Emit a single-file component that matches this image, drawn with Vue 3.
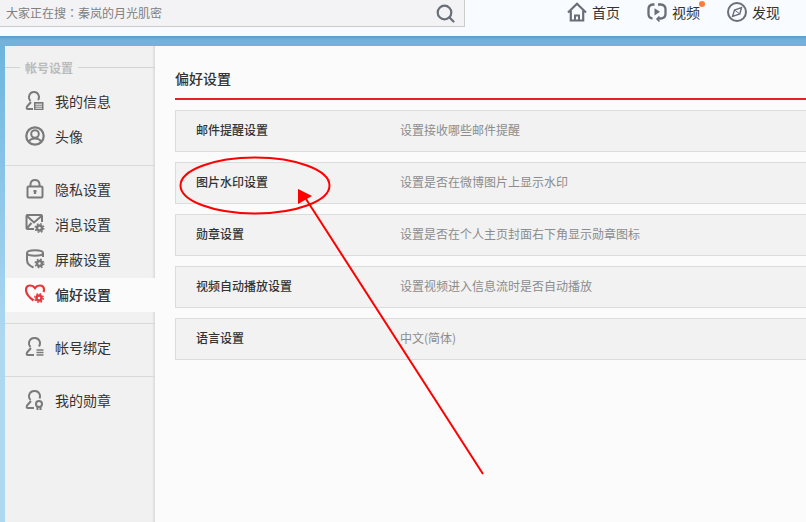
<script setup>
const groups = [
  [
    { name: '我的信息', icon: 'info' },
    { name: '头像', icon: 'avatar' },
  ],
  [
    { name: '隐私设置', icon: 'lock' },
    { name: '消息设置', icon: 'mail' },
    { name: '屏蔽设置', icon: 'shield' },
    { name: '偏好设置', icon: 'heart', active: true },
  ],
  [{ name: '帐号绑定', icon: 'bind' }],
  [{ name: '我的勋章', icon: 'medal' }],
]

const rows = [
  { title: '邮件提醒设置', desc: '设置接收哪些邮件提醒' },
  { title: '图片水印设置', desc: '设置是否在微博图片上显示水印' },
  { title: '勋章设置', desc: '设置是否在个人主页封面右下角显示勋章图标' },
  { title: '视频自动播放设置', desc: '设置视频进入信息流时是否自动播放' },
  { title: '语言设置', desc: '中文(简体)' },
]
</script>

<template>
  <div class="page">
    <header class="topbar">
      <div class="search">
        <span class="search-text">大家正在搜<span class="colon">：</span>秦岚的月光肌密</span>
        <svg class="search-icon" width="20" height="20" viewBox="0 0 20 20" fill="none" stroke="#696e78" stroke-width="2.200">
          <circle cx="9.500" cy="9.500" r="6.800" />
          <path d="M14.500 14.500l4 4" stroke-linecap="round" />
        </svg>
      </div>
      <nav class="nav">
        <a class="nav-item">
          <svg width="20" height="20" viewBox="0 0 20 20" fill="none" stroke="#696e78" stroke-width="2.200">
            <path d="M1 10.500L10 1.800l9 8.700" />
            <path d="M3.800 8.500v10h12.400v-10" />
            <path d="M8 18.500v-5h4v5" stroke-width="2" />
          </svg>
          首页
        </a>
        <a class="nav-item">
          <svg width="20" height="20" viewBox="0 0 20 20" fill="none" stroke="#696e78" stroke-width="2.300">
            <path d="M7.500 2.500H6Q1.500 3 1.500 7v5q0 4 4 4.500" />
            <path d="M11 2.500h2.500q5 .5 5 4.500v5q0 4-4.500 4.500h-3" />
            <path d="M12.500 14.500l-2.500 2.500 2.500 2.500" stroke-width="1.600" />
            <path d="M7.500 6.200l5.500 3.600-5.500 3.600z" fill="#696e78" stroke="none" />
          </svg>
          <span class="video">视频<i class="dot"></i></span>
        </a>
        <a class="nav-item">
          <svg width="20" height="20" viewBox="0 0 20 20" fill="none" stroke="#696e78" stroke-width="2">
            <circle cx="10" cy="10" r="9" />
            <path d="M14.500 5.500L12.800 12 5.500 14.500 7.500 8z" stroke-width="1.400" />
            <path d="M7.500 8l5.300 4" stroke-width="1" />
          </svg>
          发现
        </a>
      </nav>
    </header>

    <div class="band"></div>

    <div class="frame">
      <aside class="side">
        <div class="side-title"><span>帐号设置</span></div>
        <div v-for="(group, g) in groups" :key="g" class="side-group">
          <a v-for="item in group" :key="item.name" class="side-item" :class="{ active: item.active }">
            <svg class="side-icon" width="20" height="20" viewBox="0 0 20 20" fill="none" :stroke="item.active ? '#e4393c' : '#7a7a7a'" stroke-width="2">
              <template v-if="item.icon === 'info'">
                <path d="M5.500 10Q3.500 8 4 5.500 5 1 9 1t5 4.500q.2 2-1 3.500" />
                <path d="M6 11l-4 4.500Q1 18 3 18h5" />
                <path d="M9 11h9.500v8H9z" fill="#7a7a7a" stroke="none" />
                <path d="M10.500 13.200h6.500M10.500 15.200h6.500M10.500 17.200h6.500" stroke="#f1f1f1" stroke-width="1" />
              </template>
              <template v-else-if="item.icon === 'avatar'">
                <circle cx="10" cy="10" r="8.700" stroke-width="2.200" />
                <circle cx="10" cy="8" r="3.800" />
                <path d="M4 15.500q1.500-3 6-3t6 3" />
              </template>
              <template v-else-if="item.icon === 'lock'">
                <path d="M2.500 8.500q0-1 1-1h13q1 0 1 1v9q0 1-1 1h-13q-1 0-1-1z" />
                <path d="M5.500 7V5q.5-4 4.500-4t4.500 4v2" />
                <path d="M10 11.500v3.500M8.500 12.200h3" stroke-width="2.200" />
              </template>
              <template v-else-if="item.icon === 'mail'">
                <path d="M9 15H2.500q-1 0-1-1V2q0-1 1-1h13.500q1 0 1 1v6" />
                <path d="M2 2l7 6.500L16.500 2M2 14l4.500-5" />
                <circle cx="14.500" cy="14" r="2.500" stroke-width="2.500" />
                <circle cx="14.500" cy="14" r="4.300" stroke-width="1.400" stroke-dasharray="1.700 1.700" />
              </template>
              <template v-else-if="item.icon === 'shield'">
                <path d="M2 4v7q0 5 6.500 7.500M18 4v4" />
                <path d="M2 4q0-2.700 8-2.700t8 2.700q0 2.700-8 2.700T2 4z" />
                <circle cx="14.500" cy="14.500" r="2.500" stroke-width="2.500" />
                <circle cx="14.500" cy="14.500" r="4.300" stroke-width="1.400" stroke-dasharray="1.700 1.700" />
              </template>
              <template v-else-if="item.icon === 'heart'">
                <path d="M8.500 16.500Q1 11 1 6q0-4.500 4.200-4.500 3 0 4.800 2.500 1.800-2.500 4.800-2.500Q19 1.500 19 6q0 1-.4 2" stroke-width="2.200" />
                <circle cx="14" cy="14" r="2.500" stroke-width="2.500" />
                <circle cx="14" cy="14" r="4.300" stroke-width="1.400" stroke-dasharray="1.700 1.700" />
              </template>
              <template v-else-if="item.icon === 'bind'">
                <path d="M5.500 10Q3.500 8 4 5.500 5 1 9.500 1T15 5.500q.2 2-1 4" />
                <path d="M6 11l-4 4.500Q1 18 3 18h6" />
                <path d="M11.500 13h7M11.500 15.500h7M11.500 18h7" stroke-width="1.400" />
              </template>
              <template v-else>
                <path d="M5.500 10Q3.500 8 4 5.500 5 1 9.500 1T15 5.500q.2 1.500-.5 3" />
                <path d="M6 11l-4 4.500Q1 18 3 18h6" />
                <circle cx="14" cy="14" r="3" />
                <path d="M12.500 17v3M15.500 17v3" />
              </template>
            </svg>
            <span>{{ item.name }}</span>
          </a>
        </div>
      </aside>

      <main class="main">
        <h2 class="main-title">偏好设置</h2>
        <div v-for="row in rows" :key="row.title" class="row">
          <span class="row-title">{{ row.title }}</span>
          <span class="row-desc">{{ row.desc }}</span>
        </div>
      </main>
    </div>

    <svg class="mark" width="806" height="522" viewBox="0 0 806 522" fill="none" stroke="#f00" stroke-width="2">
      <ellipse cx="255" cy="185.500" rx="74.500" ry="28" />
      <path d="M483 474L306 199" />
      <path d="M298 189l14 7-14 8z" fill="#f00" stroke="none" />
    </svg>
  </div>
</template>

<style scoped>
.page {
  position: relative;
  width: 806px;
  height: 522px;
  overflow: hidden;
  font-family: "Noto Sans CJK SC", "Liberation Sans", sans-serif;
  font-size: 14px;
  color: #333;
  background: linear-gradient(#6db5de 9%, #aed8f2 65%);
}
.topbar {
  display: flex;
  height: 36px;
  background: #f8fbff;
}
.search {
  display: flex;
  align-items: center;
  justify-content: space-between;
  box-sizing: border-box;
  width: 465px;
  height: 27px;
  padding: 0 9px 2px 6px;
  background: #f3f3f5;
  border-right: 1px solid #ccc;
  border-bottom: 1px solid #ccc;
}
.search-text {
  font-size: 12px;
  color: #808080;
}
.colon {
  font-family: "Noto Sans CJK TC", sans-serif;
}
.search-icon {
  margin-top: 1px;
}
.nav {
  display: flex;
  gap: 27px;
  margin-left: 102px;
  height: 24px;
  align-items: center;
}
.nav-item {
  display: flex;
  align-items: center;
  gap: 5px;
  line-height: 24px;
}
.video {
  position: relative;
}
.dot {
  position: absolute;
  top: 1px;
  right: -5px;
  width: 6px;
  height: 6px;
  border-radius: 50%;
  background: #fa7d3c;
}
.band {
  height: 10px;
  background: linear-gradient(#5a9bc7, #74b2da 40%);
}
.frame {
  display: flex;
  height: 476px;
  margin-left: 5px;
}
.side {
  box-sizing: border-box;
  width: 150px;
  flex: none;
  padding-top: 12px;
  background: #f1f1f1;
  box-shadow: inset -3px 0 3px -2px #d2d2d2;
}
.side-title {
  display: flex;
  align-items: center;
  height: 18px;
  font-size: 12px;
  font-weight: bold;
  color: #bbb;
}
.side-title::before {
  content: "";
  width: 15px;
  height: 1px;
  background: #d3d3d3;
}
.side-title::after {
  content: "";
  flex: 1;
  height: 1px;
  background: #d3d3d3;
}
.side-title span {
  padding: 0 5px;
}
.side-group {
  padding: 7px 0 11px;
  border-bottom: 1px solid #d9d9d9;
}
.side-title + .side-group {
  padding-top: 8px;
}
.side-group:nth-of-type(4) {
  padding-bottom: 10px;
}
.side-group:last-child {
  border-bottom: 0;
}
.side-item {
  display: flex;
  align-items: center;
  box-sizing: border-box;
  height: 35px;
  padding-left: 20px;
  padding-bottom: 2px;
}
.side-group + .side-group .side-item {
  padding-bottom: 4px;
}
.side-group + .side-group .side-item.active {
  padding-bottom: 2px;
}
.side-icon {
  margin-right: 10px;
}
.side-item.active {
  height: 34px;
  background: #fbfbfb;
  font-weight: 500;
}
.main {
  flex: 1;
  min-width: 0;
  padding: 0 0 0 20px;
  background: #fbfbfb;
}
.main-title {
  box-sizing: border-box;
  height: 54px;
  margin: 0 0 10px;
  border-bottom: 2px solid #eb1c2c;
  font-size: 14px;
  font-weight: 500;
  line-height: 64px;
}
.row {
  display: flex;
  align-items: center;
  box-sizing: border-box;
  width: 660px;
  height: 42px;
  margin-bottom: 10px;
  padding-bottom: 3px;
  background: #f2f2f2;
  border: 1px solid #dcdcdc;
  font-size: 12px;
}
.row-title {
  width: 224px;
  padding-left: 20px;
  box-sizing: border-box;
  font-weight: 500;
}
.row-desc {
  color: #8c8c8c;
}
.mark {
  position: absolute;
  left: 0;
  top: 0;
  pointer-events: none;
}
</style>
